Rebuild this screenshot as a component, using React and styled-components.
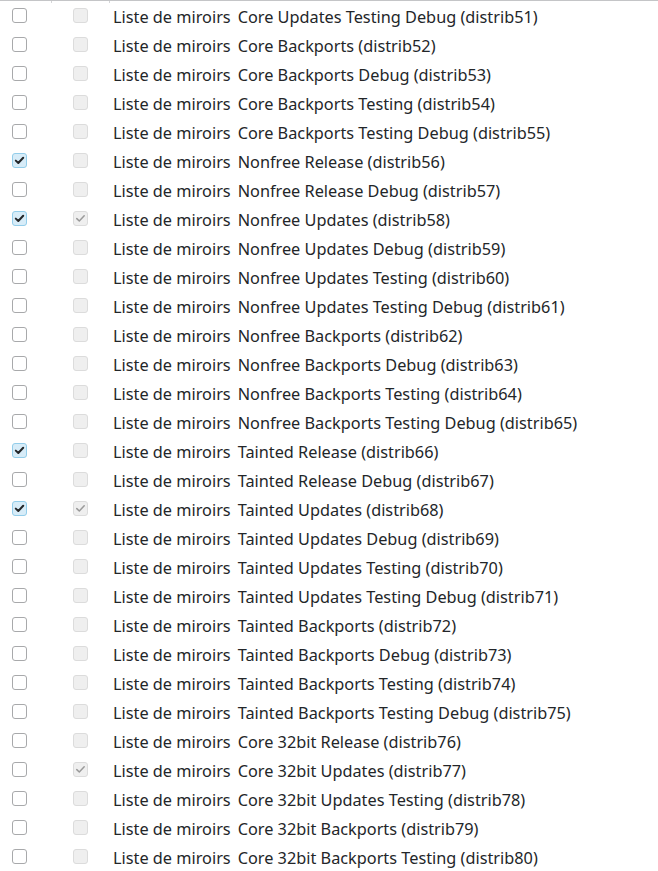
import React from "react";
import styled, { createGlobalStyle } from "styled-components";

const Global = createGlobalStyle`
  html, body { margin: 0; padding: 0; background: #ffffff; }
  body { font-family: "Noto Sans", "DejaVu Sans", sans-serif; color: #232629; }
`;

const rows = [
  ["Core Updates Testing Debug", 51],
  ["Core Backports", 52],
  ["Core Backports Debug", 53],
  ["Core Backports Testing", 54],
  ["Core Backports Testing Debug", 55],
  ["Nonfree Release", 56, true, false],
  ["Nonfree Release Debug", 57],
  ["Nonfree Updates", 58, true, true],
  ["Nonfree Updates Debug", 59],
  ["Nonfree Updates Testing", 60],
  ["Nonfree Updates Testing Debug", 61],
  ["Nonfree Backports", 62],
  ["Nonfree Backports Debug", 63],
  ["Nonfree Backports Testing", 64],
  ["Nonfree Backports Testing Debug", 65],
  ["Tainted Release", 66, true, false],
  ["Tainted Release Debug", 67],
  ["Tainted Updates", 68, true, true],
  ["Tainted Updates Debug", 69],
  ["Tainted Updates Testing", 70],
  ["Tainted Updates Testing Debug", 71],
  ["Tainted Backports", 72],
  ["Tainted Backports Debug", 73],
  ["Tainted Backports Testing", 74],
  ["Tainted Backports Testing Debug", 75],
  ["Core 32bit Release", 76],
  ["Core 32bit Updates", 77, false, true],
  ["Core 32bit Updates Testing", 78],
  ["Core 32bit Backports", 79],
  ["Core 32bit Backports Testing", 80],
];

const Table = styled.div`
  width: 658px;
  display: flex;
  flex-direction: column;
`;

const HeaderEdge = styled.div`
  display: grid;
  grid-template-columns: 52px 58px 1fr;
  border-top: 1px solid #c4c5c7;
  height: 2px;
  margin-bottom: -2px;
`;

const HeaderTick = styled.div`
  border-right: ${(p) => (p.$last ? "none" : "1px solid #d4d5d7")};
`;

const Row = styled.div`
  display: grid;
  grid-template-columns: 52px 58px 1fr;
  align-items: center;
  height: 29px;
`;

const Cell = styled.div`
  display: flex;
  align-items: center;
  padding-left: ${(p) => p.$pad}px;
`;

const Box = styled.div`
  width: 15px;
  height: 15px;
  box-sizing: border-box;
  border-radius: 3px;
  border: 1px solid ${(p) => (p.$disabled ? "#dcdcdc" : p.$checked ? "#93cdea" : "#a8a9ab")};
  background: ${(p) => (p.$disabled ? "#efefef" : p.$checked ? "#d7ecf8" : "#ffffff")};
  display: flex;
  align-items: center;
  justify-content: center;
`;

const Label = styled.div`
  display: flex;
  gap: 7px;
  font-size: 16.3px;
  line-height: 20px;
  padding-top: 2px;
  color: #232629;
  white-space: nowrap;
`;

function Check({ disabled }) {
  return (
    <svg width="11" height="11" viewBox="0 0 11 11">
      <polyline
        points="1.8,5.6 4.3,8 9.2,2.8"
        fill="none"
        stroke={disabled ? "#9a9a9a" : "#232629"}
        strokeWidth={disabled ? 1.5 : 2}
        strokeLinecap="round"
        strokeLinejoin="round"
      />
    </svg>
  );
}

function CheckBox({ checked, disabled }) {
  return (
    <Box $checked={checked} $disabled={disabled}>
      {checked && <Check disabled={disabled} />}
    </Box>
  );
}

export default function App() {
  return (
    <>
      <Global />
      <Table>
        <HeaderEdge>
          <HeaderTick />
          <HeaderTick />
          <HeaderTick $last />
        </HeaderEdge>
        {rows.map(([name, n, a, b]) => (
          <Row key={n}>
            <Cell $pad={12}>
              <CheckBox checked={!!a} />
            </Cell>
            <Cell $pad={21}>
              <CheckBox checked={!!b} disabled />
            </Cell>
            <Cell $pad={3}>
              <Label>
                <span>Liste de miroirs</span>
                <span>{`${name} (distrib${n})`}</span>
              </Label>
            </Cell>
          </Row>
        ))}
      </Table>
    </>
  );
}
